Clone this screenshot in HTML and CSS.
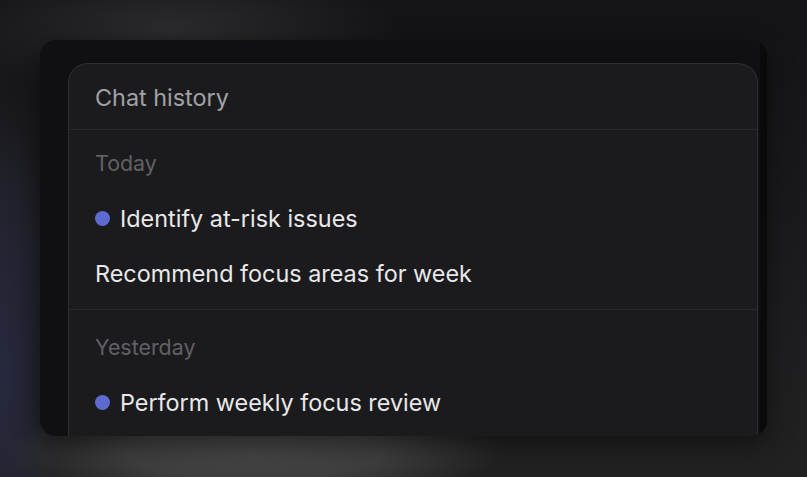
FILE: index.html
```html
<!DOCTYPE html>
<html lang="en">
<head>
<meta charset="utf-8">
<title>Chat history</title>
<link rel="stylesheet" href="styles.css">
</head>
<body>
  <div class="frame">
    <section class="panel">
      <header class="panel-header">Chat history</header>
      <div class="group">
        <div class="group-label">Today</div>
        <div class="item"><span class="dot"></span>Identify at-risk issues</div>
        <div class="item">Recommend focus areas for week</div>
      </div>
      <div class="group">
        <div class="group-label">Yesterday</div>
        <div class="item"><span class="dot"></span>Perform weekly focus review</div>
      </div>
    </section>
    <div class="track"></div>
  </div>
</body>
</html>
```

FILE: styles.css
```css
html, body {
  margin: 0;
  height: 100%;
}

body {
  width: 807px;
  height: 477px;
  overflow: hidden;
  box-sizing: border-box;
  padding: 40px 0 0 40px;
  font-family: Inter, "Noto Sans", sans-serif;
  background-color: #1c1c1e;
  background-image:
    radial-gradient(ellipse 250px 55px at 255px 452px, rgba(70, 70, 70, 1) 0%, rgba(66, 66, 66, 0.9) 50%, rgba(60, 60, 60, 0) 100%),
    radial-gradient(ellipse 55px 260px at 5px 380px, rgba(40, 42, 66, 0.85), rgba(40, 42, 66, 0) 100%),
    radial-gradient(ellipse 230px 70px at 170px 30px, rgba(46, 46, 48, 0.9), rgba(46, 46, 48, 0) 100%),
    radial-gradient(ellipse 90px 200px at 0px 250px, rgba(36, 36, 46, 0.7), rgba(36, 36, 46, 0) 100%),
    linear-gradient(180deg, #141416 0%, #19191b 40%, #1e1e20 70%, #212122 100%);
}

.frame {
  width: 727px;
  height: 396px;
  box-sizing: border-box;
  background: #101012;
  border-radius: 16px;
  overflow: hidden;
  display: flex;
  align-items: flex-start;
  padding: 23px 0 0 28px;
  box-shadow: 0 8px 28px rgba(0, 0, 0, 0.45);
}

.panel {
  width: 690px;
  height: 380px;
  flex: none;
  box-sizing: border-box;
  background: #1b1b1d;
  border: 1px solid #2f2f32;
  border-bottom: none;
  border-radius: 20px 20px 0 0;
  color: #e6e6e8;
}

.track {
  flex: none;
  width: 7px;
  height: 100%;
  margin-left: 2px;
  margin-top: -23px;
  padding-top: 23px;
  background: #0a0a0b;
}

.panel-header {
  height: 63px;
  line-height: 63px;
  padding: 2px 0 0 26px;
  border-bottom: 1px solid #2a2a2d;
  font-size: 23.4px;
  color: #a2a2a6;
}

.group {
  padding: 6px 0 8px;
}

.group + .group {
  border-top: 1px solid #2a2a2d;
  padding-top: 10px;
}

.group-label {
  line-height: 55px;
  padding-left: 26px;
  font-size: 21.4px;
  color: #616165;
}

.item {
  display: flex;
  align-items: center;
  height: 55px;
  padding-left: 26px;
  font-size: 23.4px;
  color: #e8e8ea;
}

.dot {
  width: 15px;
  height: 15px;
  border-radius: 50%;
  background: #5e6ad2;
  margin-right: 10px;
  flex: none;
}
```
